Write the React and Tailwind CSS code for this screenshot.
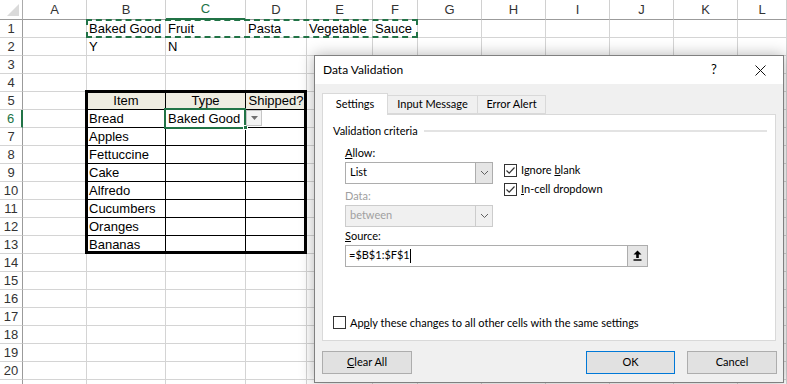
import React from "react";

const COLS = ["A", "B", "C", "D", "E", "F", "G", "H", "I", "J", "K", "L"];
const ROWS = Array.from({ length: 21 }, (_, i) => i + 1);

const CELLS = {
  B1: "Baked Good",
  C1: "Fruit",
  D1: "Pasta",
  E1: "Vegetable",
  F1: "Sauce",
  B2: "Y",
  C2: "N",
  B5: "Item",
  C5: "Type",
  D5: "Shipped?",
  B6: "Bread",
  C6: "Baked Good",
  B7: "Apples",
  B8: "Fettuccine",
  B9: "Cake",
  B10: "Alfredo",
  B11: "Cucumbers",
  B12: "Oranges",
  B13: "Bananas",
};

const inTable = (col, row) => ["B", "C", "D"].includes(col) && row >= 5 && row <= 13;

const Cell = ({ col, row }) => {
  const text = CELLS[col + row];
  const table = inTable(col, row);
  const rightBlack = table || (col === "A" && row >= 5 && row <= 13);
  const bottomBlack = table || (row === 4 && ["B", "C", "D"].includes(col));
  const head = row === 5 && table;
  return (
    <div
      className={`h-[18px] border-r border-b flex items-center px-[2px] overflow-hidden whitespace-nowrap text-[13px] text-black ${
        rightBlack ? "border-r-black" : "border-r-[#d4d4d4]"
      } ${bottomBlack ? "border-b-black" : "border-b-[#d4d4d4]"} ${
        head ? "bg-[#eeece1] justify-center" : "bg-white"
      }`}
    >
      {text}
    </div>
  );
};

const Check = ({ checked }) => (
  <span className="w-[13px] h-[13px] border border-[#333] bg-white flex items-center justify-center shrink-0">
    {checked && (
      <svg width="11" height="11" viewBox="0 0 11 11">
        <path d="M1.5 5.5 L4.2 8.2 L9.5 2.5" fill="none" stroke="#333" strokeWidth="1.2" />
      </svg>
    )}
  </span>
);

const Chevron = () => (
  <svg width="9" height="6" viewBox="0 0 9 6">
    <path d="M1 1 L4.5 4.5 L8 1" fill="none" stroke="#606060" strokeWidth="1" />
  </svg>
);

const Select = ({ value, disabled }) => (
  <div
    className={`w-[148px] h-[22px] border flex ${
      disabled ? "border-[#cccccc] bg-[#f0f0f0] text-[#a0a0a0]" : "border-[#adadad] bg-white text-black"
    }`}
  >
    <div className="flex-1 flex items-center pl-[4px]">{value}</div>
    <div
      className={`w-[17px] flex items-center justify-center border-l ${
        disabled ? "border-[#cccccc] bg-[#f0f0f0]" : "border-[#adadad] bg-[#e5e5e5]"
      }`}
    >
      <Chevron />
    </div>
  </div>
);

const Btn = ({ children, primary, w = "w-[90px]" }) => (
  <div
    className={`h-[23px] ${w} flex items-center justify-center bg-[#e1e1e1] border ${
      primary ? "border-[#0078d7]" : "border-[#adadad]"
    }`}
  >
    {children}
  </div>
);

const DataValidation = () => (
  <div className="absolute left-[314px] top-[55px] w-[470px] h-[328px] bg-[#f0f0f0] border border-[#808080] shadow-[0_0_14px_rgba(0,0,0,0.3)] font-['Lato',sans-serif] text-[11px] text-black">
    <div className="h-[28px] bg-white flex items-center text-[12px]">
      <span className="pl-[8px]">Data Validation</span>
      <span className="ml-auto w-[46px] text-center text-[13px]">?</span>
      <span className="w-[46px] flex items-center justify-center">
        <svg width="11" height="11" viewBox="0 0 11 11">
          <path d="M0.5 0.5 L10.5 10.5 M10.5 0.5 L0.5 10.5" stroke="#111" strokeWidth="1" />
        </svg>
      </span>
    </div>

    <div className="px-[7px] pt-[8px]">
      <div className="flex items-end h-[22px]">
        <div className="h-[22px] w-[66px] bg-white border border-b-0 border-[#d9d9d9] flex items-center justify-center relative top-[1px]">
          Settings
        </div>
        <div className="h-[19px] w-[90px] border border-l-0 border-[#d9d9d9] flex items-center justify-center">
          Input Message
        </div>
        <div className="h-[19px] w-[68px] border border-l-0 border-[#d9d9d9] flex items-center justify-center">
          Error Alert
        </div>
      </div>

      <div className="w-[454px] h-[227px] bg-white border border-[#d9d9d9] pt-[8px] pl-[10px]">
        <div className="flex items-center gap-[6px] pr-[8px]">
          <span>Validation criteria</span>
          <span className="flex-1 h-[2px] bg-[#e3e3e3]" />
        </div>

        <div className="pl-[12px] flex">
          <div className="w-[159px]">
            <div className="mt-[5px] h-[16px] leading-[16px]">
              <u>A</u>llow:
            </div>
            <div className="mt-[1px]">
              <Select value="List" />
            </div>
            <div className="mt-[4px] h-[16px] leading-[16px] text-[#a0a0a0]">Data:</div>
            <div className="mt-[1px]">
              <Select value="between" disabled />
            </div>
          </div>
          <div className="pt-[24px] flex flex-col gap-[6px]">
            <div className="flex items-center gap-[4px] h-[13px]">
              <Check checked />
              <span>
                Ignore <u>b</u>lank
              </span>
            </div>
            <div className="flex items-center gap-[4px] h-[13px]">
              <Check checked />
              <span>
                <u>I</u>n-cell dropdown
              </span>
            </div>
          </div>
        </div>

        <div className="pl-[12px] mt-[1px] h-[16px] leading-[16px]">
          <u>S</u>ource:
        </div>
        <div className="pl-[12px] mt-[1px]">
          <div className="w-[303px] h-[22px] border border-[#adadad] flex bg-white">
            <div className="flex-1 flex items-center pl-[3px]">
              =$B$1:$F$1<span className="w-[1px] h-[14px] bg-black" />
            </div>
            <div className="w-[20px] bg-[#e5e5e5] border-l border-[#adadad] flex items-center justify-center">
              <svg width="9" height="11" viewBox="0 0 9 11">
                <path d="M4.5 0.5 L8.5 4.5 L5.8 4.5 L5.8 8 L3.2 8 L3.2 4.5 L0.5 4.5 Z" fill="#000" />
                <rect x="0.5" y="9.3" width="8" height="1.4" fill="#000" />
              </svg>
            </div>
          </div>
        </div>

        <div className="mt-[48px] flex items-center gap-[4px]">
          <Check />
          <span>
            Ap<u>p</u>ly these changes to all other cells with the same settings
          </span>
        </div>
      </div>

      <div className="mt-[10px] flex">
        <Btn>
          <span>
            <u>C</u>lear All
          </span>
        </Btn>
        <div className="ml-auto mr-[-1px] flex gap-[12px]">
          <Btn primary w="w-[89px]">OK</Btn>
          <Btn>Cancel</Btn>
        </div>
      </div>
    </div>
  </div>
);

export default function App() {
  return (
    <div className="relative w-[787px] h-[384px] overflow-hidden bg-white font-['Liberation_Sans',Arial,sans-serif]">
      <div className="grid grid-cols-[23px_64px_79px_80px_61px_66px_45px_64px_64px_64px_64px_64px_1fr]">
        <div className="h-[20px] bg-white border-r border-b border-r-[#ababab] border-b-[#9b9b9b] flex items-end justify-end p-[3px]">
          <svg width="12" height="12" viewBox="0 0 12 12">
            <path d="M12 0 L12 12 L0 12 Z" fill="#dadada" />
          </svg>
        </div>
        {COLS.map((c) => (
          <div
            key={c}
            className={`h-[20px] bg-white border-r border-r-[#d0d0d0] flex items-center justify-center text-[13px] ${
              c === "C"
                ? "border-b-2 border-b-[#217346] text-[#217346] bg-[#e8e8e8]"
                : "border-b border-b-[#9b9b9b] text-[#333]"
            }`}
          >
            {c}
          </div>
        ))}
        {ROWS.map((r) => (
          <React.Fragment key={r}>
            <div
              className={`h-[18px] bg-white border-b border-b-[#d4d4d4] flex items-center justify-center text-[13px] ${
                r === 6
                  ? "border-r-2 border-r-[#217346] text-[#217346] bg-[#e8e8e8]"
                  : "border-r border-r-[#9b9b9b] text-[#333]"
              }`}
            >
              {r < 21 ? r : null}
            </div>
            {COLS.map((c) => (
              <Cell key={c + r} col={c} row={r} />
            ))}
          </React.Fragment>
        ))}
      </div>

      {/* copy marquee round B1:F1 */}
      <div className="absolute left-[86px] top-[19px] w-[332px] h-[19px] border-2 border-dashed border-[#217346]" />
      {/* table outline */}
      <div className="absolute left-[85px] top-[90px] w-[222px] h-[164px] border-[3px] border-black" />
      {/* active cell C6 */}
      <div className="absolute left-[164px] top-[108px] w-[82px] h-[21px] border-2 border-[#217346]" />
      <div className="absolute left-[243px] top-[125px] w-[5px] h-[5px] bg-[#217346] border border-white" />
      {/* in-cell dropdown button */}
      <div className="absolute left-[246px] top-[110px] w-[16px] h-[16px] bg-[#f3f3f3] border border-[#c6c6c6] flex items-center justify-center">
        <svg width="7" height="4" viewBox="0 0 7 4">
          <path d="M0 0 L7 0 L3.5 4 Z" fill="#707070" />
        </svg>
      </div>

      <DataValidation />
    </div>
  );
}
